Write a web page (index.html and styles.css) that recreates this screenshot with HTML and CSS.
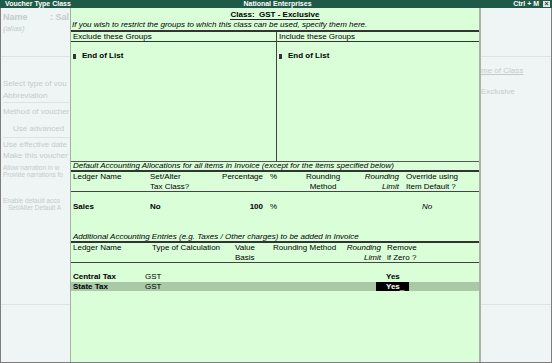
FILE: index.html
```html
<!DOCTYPE html>
<html lang="en">
<head>
    <meta charset="UTF-8">
    <title>Voucher Type Class</title>
    <link rel="stylesheet" href="styles.css">
</head>
<body>
    <div class="window">
        <div class="titlebar">
            <span class="tb-left">Voucher Type Class</span>
            <span class="tb-center">National Enterprises</span>
            <span class="tb-right">Ctrl + M <span class="close">&times;</span></span>
        </div>

        <div class="screen">
            <!-- voucher type form behind the popup -->
            <div class="form">
                <div class="form-head">
                    <div class="name-line">
                        <span class="name-label">Name</span>
                        <span>: Sal</span>
                    </div>
                    <div class="alias">(alias)</div>
                </div>
                <div class="form-body">
                    <div class="form-left">
                        <div class="fgroup g1">
                            <div class="fl">Select type of vou</div>
                            <div class="fl gap2">Abbreviation</div>
                        </div>
                        <div class="fgroup g2">
                            <div class="fl">Method of voucher</div>
                            <div class="fl indent">Use advanced</div>
                        </div>
                        <div class="fgroup g3">
                            <div class="fl">Use effective date</div>
                            <div class="fl gap1">Make this voucher</div>
                            <div class="fl small first">Allow narration in w</div>
                            <div class="fl small">Provide narrations fo</div>
                            <div class="fl small enable">Enable default acco</div>
                            <div class="fl small sub">Set/Alter Default A</div>
                        </div>
                    </div>
                    <div class="form-right">
                        <div class="fr-title">me of Class</div>
                        <div class="fr-value">Exclusive</div>
                    </div>
                </div>
            </div>

            <!-- voucher class popup -->
            <div class="popup">
                <div class="class-row"><span class="class-title">Class:&nbsp; GST - Exclusive</span></div>
                <div class="note first-note">If you wish to restrict the groups to which this class can be used, specify them here.</div>

                <div class="groups">
                    <div class="gcol">
                        <div class="ghead">Exclude these Groups</div>
                        <div class="gbody"><span class="mark"></span><b>End of List</b></div>
                    </div>
                    <div class="gcol gcol-right">
                        <div class="ghead">Include these Groups</div>
                        <div class="gbody"><span class="mark"></span><b>End of List</b></div>
                    </div>
                </div>

                <div class="note sec-note">Default Accounting Allocations for all items in Invoice (except for the items specified below)</div>
                <div class="alloc">
                    <div class="thead alloc-cols">
                        <span>Ledger Name</span>
                        <span>Set/Alter<br>Tax Class?</span>
                        <span class="right">Percentage</span>
                        <span class="pct">%</span>
                        <span class="center">Rounding<br>Method</span>
                        <span class="right it">Rounding<br>Limit</span>
                        <span class="override">Override using<br>Item Default ?</span>
                    </div>
                    <div class="tbody alloc-body">
                        <div class="alloc-cols trow">
                            <b>Sales</b>
                            <b>No</b>
                            <b class="right">100</b>
                            <span class="pct">%</span>
                            <span></span>
                            <span></span>
                            <span class="override it no">No</span>
                        </div>
                    </div>
                </div>

                <div class="note sec-note add-note">Additional Accounting Entries (e.g. Taxes / Other charges) to be added in Invoice</div>
                <div class="extra">
                    <div class="thead extra-cols">
                        <span>Ledger Name</span>
                        <span class="calc">Type of Calculation</span>
                        <span>Value<br>Basis</span>
                        <span>Rounding Method</span>
                        <span class="right it">Rounding<br>Limit</span>
                        <span class="remove">Remove<br>if Zero ?</span>
                    </div>
                    <div class="tbody extra-body">
                        <div class="extra-cols trow">
                            <b>Central Tax</b>
                            <span>GST</span>
                            <span></span>
                            <span></span>
                            <span></span>
                            <b class="yes">Yes</b>
                        </div>
                        <div class="extra-cols trow active">
                            <b>State Tax</b>
                            <span>GST</span>
                            <span></span>
                            <span></span>
                            <span></span>
                            <span class="yes"><b class="field">Yes<i class="cursor">_</i></b></span>
                        </div>
                    </div>
                </div>
            </div>
        </div>
    </div>
</body>
</html>
```

FILE: styles.css
```css
* {
    box-sizing: border-box;
}
body {
    margin: 0;
    font-family: "Liberation Sans", Arial, sans-serif;
    font-size: 8px;
    color: #000;
    background-color: #eef5f4;
}
.window {
    width: 552px;
    height: 363px;
    display: flex;
    flex-direction: column;
    overflow: hidden;
}

/* title bar */
.titlebar {
    height: 8px;
    background-color: #1f5a47;
    color: #fff;
    font-size: 7px;
    font-weight: bold;
    line-height: 8px;
    display: grid;
    grid-template-columns: 1fr auto 1fr;
    padding: 0 2px 0 5px;
}
.tb-right {
    justify-self: end;
    display: flex;
    align-items: center;
    gap: 4px;
}
.close {
    width: 7px;
    height: 6px;
    background-color: #dfe8e6;
    color: #333;
    font-size: 7px;
    line-height: 6px;
    text-align: center;
}

.screen {
    flex: 1;
    position: relative;
    border: 1px solid #7d7d7d;
    border-top: 0;
}

/* faded form behind the popup */
.form {
    color: #c4ccc9;
}
.form-head {
    height: 49px;
    padding: 4px 0 0 2px;
    border-bottom: 1px solid #dbe4e2;
}
.name-line {
    display: flex;
    height: 11px;
    line-height: 11px;
    font-size: 9px;
    font-weight: bold;
    white-space: nowrap;
}
.name-label {
    width: 47px;
    flex-shrink: 0;
}
.alias {
    font-style: italic;
    line-height: 10px;
    margin-top: 1px;
}
.form-body {
    height: 248px;
    display: flex;
    border-bottom: 1px solid #dbe4e2;
}
.form-left {
    width: 69px;
    padding-left: 2px;
}
.fgroup {
    border-bottom: 1px solid #dbe4e2;
}
.fgroup.g3 {
    border-bottom: 0;
}
.fl {
    line-height: 10px;
    white-space: nowrap;
}
.g1 {
    padding-top: 22px;
    padding-bottom: 1px;
}
.g2 {
    padding-top: 4px;
    padding-bottom: 3px;
}
.g3 {
    padding-top: 2px;
}
.gap2 {
    margin-top: 2px;
}
.gap1 {
    margin-top: 1px;
}
.indent {
    margin-top: 7px;
    padding-left: 10px;
}
.small {
    font-size: 6.5px;
    line-height: 7px;
}
.small.first {
    margin-top: 3px;
}
.small.enable {
    margin-top: 19px;
}
.small.sub {
    padding-left: 5px;
}
.form-right {
    margin-left: auto;
    width: 70px;
    padding-top: 9px;
    white-space: nowrap;
}
.fr-title {
    line-height: 10px;
    text-decoration: underline;
}
.fr-value {
    line-height: 10px;
    margin-top: 11px;
}

/* popup */
.popup {
    position: absolute;
    left: 69px;
    top: 0;
    bottom: 0;
    width: 411px;
    background-color: #d9fed8;
    border-left: 1px solid #a2b3a2;
    border-right: 2px solid #a6b5a6;
    display: flex;
    flex-direction: column;
}
.class-row {
    height: 12px;
    padding-top: 2px;
    text-align: center;
}
.class-title {
    display: inline-block;
    line-height: 9px;
    font-weight: bold;
    border-bottom: 1px solid #222;
    padding: 0 1px;
}
.note {
    font-style: italic;
    white-space: nowrap;
}
.first-note {
    height: 10px;
    line-height: 10px;
    padding-left: 1px;
}
.groups {
    display: grid;
    grid-template-columns: 205px 1fr;
    border-top: 2px solid #333;
    border-bottom: 1px solid #555;
}
.gcol-right {
    border-left: 1px solid #444;
}
.ghead {
    height: 10px;
    line-height: 9px;
    padding-left: 2px;
    border-bottom: 1px solid #333;
}
.gbody {
    height: 119px;
    padding: 9px 0 0 2px;
    line-height: 10px;
    display: flex;
    align-items: flex-start;
    gap: 6px;
}
.mark {
    width: 3px;
    height: 5px;
    margin-top: 3px;
    background-color: #333;
}
.sec-note {
    height: 8px;
    line-height: 8px;
    padding-left: 2px;
}
.add-note {
    height: 9px;
    line-height: 9px;
}
.alloc, .extra {
    border-top: 2px solid #333;
}
.thead {
    height: 20px;
    line-height: 9.5px;
    border-bottom: 1px solid #444;
}
.alloc-cols {
    display: grid;
    grid-template-columns: 77px 70px 43px 37px 46px 53px 1fr;
    padding-left: 2px;
}
.extra-cols {
    display: grid;
    grid-template-columns: 72px 90px 38px 73px 35px 1fr;
    padding-left: 2px;
}
.right {
    text-align: right;
}
.center {
    text-align: center;
}
.it {
    font-style: italic;
}
.pct {
    padding-left: 7px;
}
.override {
    padding-left: 7px;
}
.override.no {
    padding-left: 23px;
}
.calc {
    padding-left: 7px;
}
.remove {
    padding-left: 6px;
}
.alloc-body {
    height: 40px;
    padding-top: 10px;
}
.trow {
    height: 10px;
    line-height: 10px;
    white-space: nowrap;
}
.extra-body {
    padding-top: 9px;
}
.trow.active {
    height: 9px;
    line-height: 9px;
    background-color: #a9c9a7;
}
.yes {
    padding-left: 5px;
}
.field {
    display: inline-block;
    width: 33px;
    margin-left: -10px;
    padding-left: 10px;
    background-color: #000;
    color: #fff;
}
.cursor {
    font-style: normal;
    font-size: 8px;
    font-weight: normal;
}
```
